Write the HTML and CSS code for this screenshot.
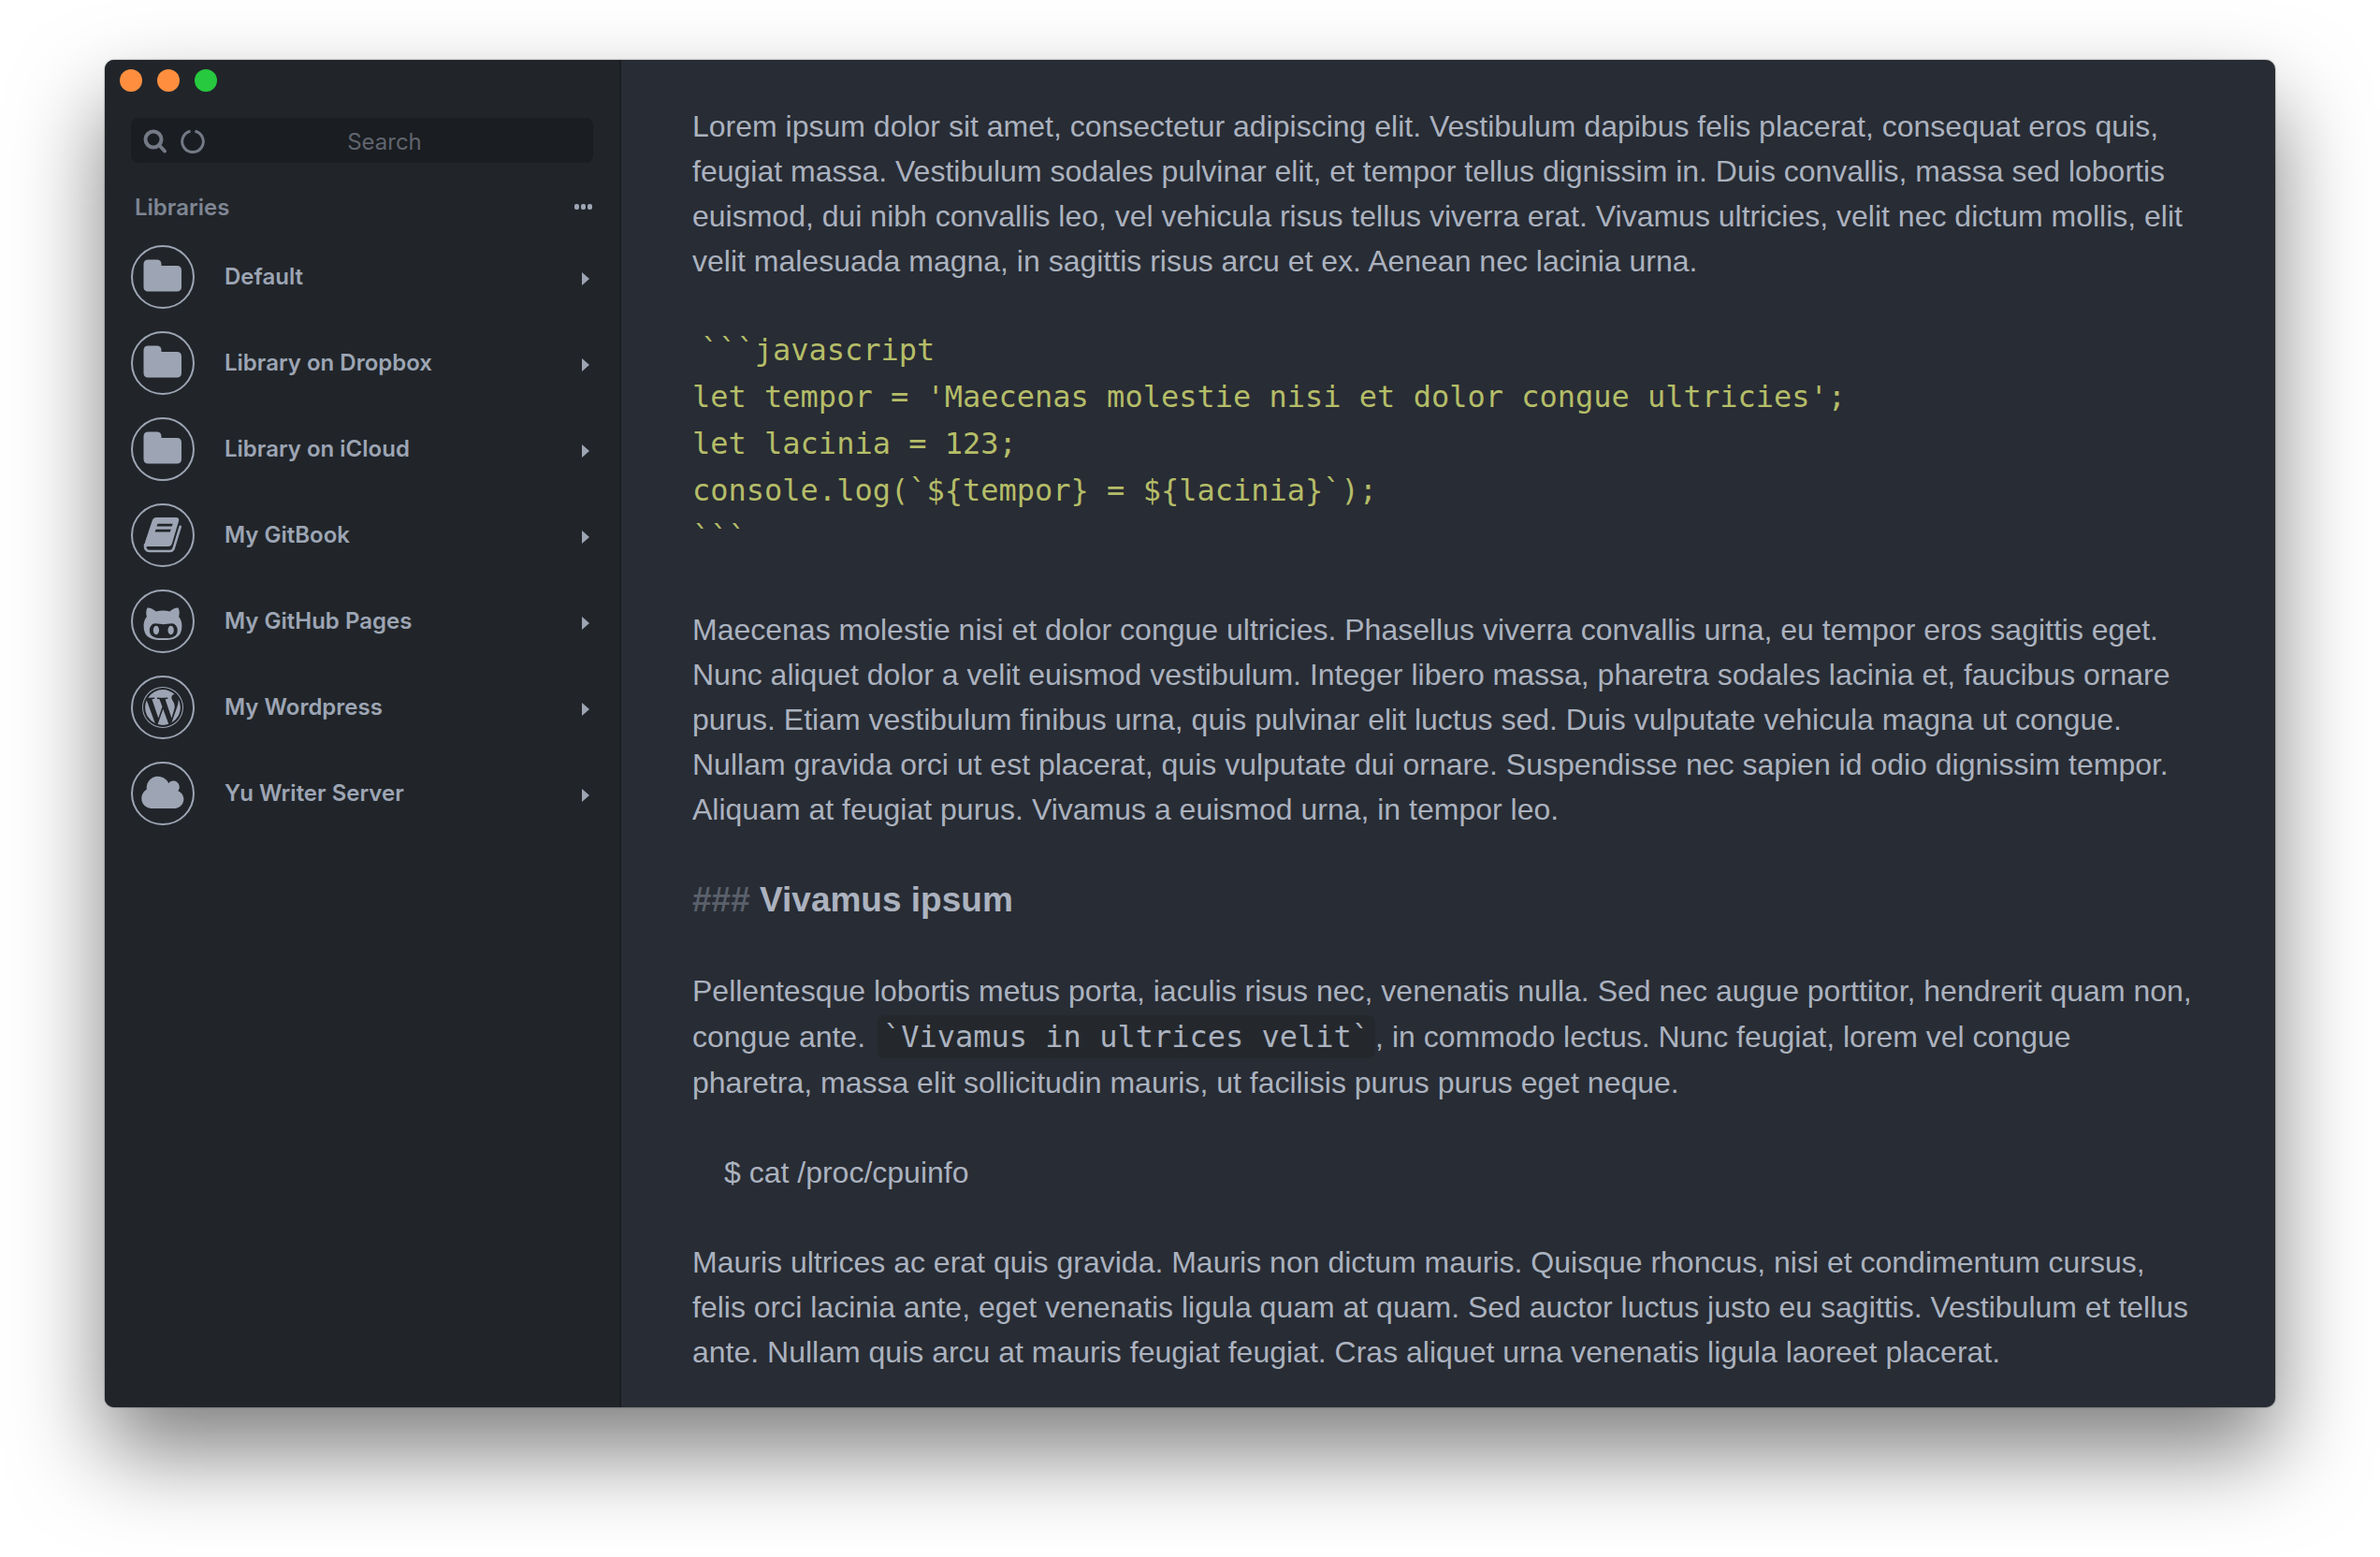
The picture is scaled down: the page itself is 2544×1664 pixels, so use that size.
FILE: index.html
```html
<!DOCTYPE html>
<html lang="en">
  <head>
    <meta charset="UTF-8" />
    <meta name="viewport" content="width=device-width, initial-scale=1.0" />
    <title>Yu Writer</title>
    <link rel="stylesheet" href="styles.css">
  </head>
  <body>
    <!-- shared icons -->
    <svg class="sprite" aria-hidden="true">
      <symbol id="folder" viewBox="12 12 44 44">
        <path d="M18.5 15.5h9q5 0 5 5v1.500h16.500q5 0 5 5v17.500q0 5-5 5h-30.500q-5 0-5-5v-24q0-5 5-5z" />
      </symbol>
      <symbol id="arrow" viewBox="0 0 8 14">
        <path d="M0 0l8 7-8 7z" />
      </symbol>
    </svg>

    <div class="window">
      <aside class="sidebar">
        <div class="window-btns">
          <button class="close" aria-label="Close"></button>
          <button class="minimize" aria-label="Minimize"></button>
          <button class="zoom" aria-label="Zoom"></button>
        </div>

        <div class="search">
          <div class="search-icons">
            <svg width="26" height="26" viewBox="0 0 26 26" fill="none" stroke="currentColor" aria-hidden="true">
              <circle cx="11" cy="11" r="8.500" stroke-width="4" />
              <path d="M17 17l6 6.500" stroke-width="4" stroke-linecap="round" />
            </svg>
            <svg width="26" height="26" viewBox="0 0 26 26" fill="none" stroke="currentColor" aria-hidden="true">
              <path d="M10.500 2.300a11.300 11.300 0 1 0 5 0" stroke-width="3" />
            </svg>
          </div>
          <input type="text" placeholder="Search" aria-label="Search" />
        </div>

        <div class="libraries-head">
          <h2>Libraries</h2>
          <button class="more" aria-label="More">
            <svg width="20" height="6" viewBox="0 0 20 6" aria-hidden="true">
              <rect width="5" height="6" rx="2" />
              <rect x="7" width="5" height="6" rx="2" />
              <rect x="14" width="5" height="6" rx="2" />
            </svg>
          </button>
        </div>

        <nav class="libraries">
          <a href="#">
            <span class="icon"><svg><use href="#folder" /></svg></span>
            <span class="name">Default</span>
            <svg class="arrow"><use href="#arrow" /></svg>
          </a>
          <a href="#">
            <span class="icon"><svg><use href="#folder" /></svg></span>
            <span class="name">Library on Dropbox</span>
            <svg class="arrow"><use href="#arrow" /></svg>
          </a>
          <a href="#">
            <span class="icon"><svg><use href="#folder" /></svg></span>
            <span class="name">Library on iCloud</span>
            <svg class="arrow"><use href="#arrow" /></svg>
          </a>
          <a href="#">
            <span class="icon">
              <svg viewBox="12 12 44 44">
                <path fill-rule="evenodd" d="M27.500 15h20.500q4 0 3 4l-7 23.500q-1 3.500-4.500 3.500h-21q-2 0-3 1-1.500-2-.5-5.500l7.500-22.500q1-4 5-4zM28.500 21.700l-1 2.800h16.200l1-2.800zM26.600 27.700l-1 2.800h16.200l1-2.800z" />
                <path fill="none" stroke="currentColor" stroke-width="2.600" stroke-linecap="round" stroke-linejoin="round" d="M15 44q-.5 7 5 7h21.500q3.200 0 4.200-3.200l7-23" />
              </svg>
            </span>
            <span class="name">My GitBook</span>
            <svg class="arrow"><use href="#arrow" /></svg>
          </a>
          <a href="#">
            <span class="icon">
              <svg viewBox="0 -64 1792 1792">
                <path d="M736 1216q0 40-12.500 82t-43 76-72.500 34-72.500-34-43-76-12.500-82 12.500-82 43-76 72.500-34 72.500 34 43 76 12.500 82zm640 0q0 40-12.500 82t-43 76-72.500 34-72.500-34-43-76-12.500-82 12.500-82 43-76 72.500-34 72.500 34 43 76 12.500 82zm160 0q0-120-69-204t-187-84q-41 0-195 21-71 11-157 11t-157-11q-152-21-195-21-118 0-187 84t-69 204q0 88 32 153.500t81 103 122 60 140 29.500 149 7h168q82 0 149-7t140-29.500 122-60 81-103 32-153.500zm192-192q0 207-61 331-38 77-105.500 133t-141 86-170 47.500-171.500 22-167 4.500q-78 0-142-3t-147.500-12.500-152.500-30-137-51.500-121-81-86-115q-62-123-62-331 0-237 136-396-27-82-27-170 0-116 51-218 108 0 190 39.500t189 123.500q147-35 309-35 148 0 280 32 105-82 187-121t189-39q51 102 51 218 0 87-27 168 136 160 136 398z" />
              </svg>
            </span>
            <span class="name">My GitHub Pages</span>
            <svg class="arrow"><use href="#arrow" /></svg>
          </a>
          <a href="#">
            <span class="icon">
              <svg viewBox="0 0 1792 1792">
                <path d="M127 896q0-163 67-313l367 1005q-196-95-315-281t-119-411zm1288-39q0 19-2.500 38.500t-10 49.500-11.500 44-17.500 59-17.500 58l-76 256-278-826q46-3 88-8 19-2 26-18.500t-2.500-31-28.500-13.500l-205 10q-75-1-202-10-12-1-20.500 5t-11.500 15-1.500 18.500 9 16.500 19.500 8l80 8 120 328-168 504-280-832q46-3 88-8 19-2 26-18.500t-2.500-31-28.500-13.500l-205 10q-7 0-23-.5t-26-.5q105-160 274.500-253.500t367.500-93.500q147 0 280.500 53t238.500 149h-10q-55 0-92 40.500t-37 95.500q0 12 2 24t4 21.500 8 23 9 21 12 22.500 12.500 21 14.500 24 14 23q63 107 63 212zm-506 106l237 647q1 6 5 11-126 44-255 44-112 0-217-32zm661-436q95 174 95 369 0 209-104 385.500t-279 278.500l235-678q59-169 59-276 0-42-6-79zm-674-527q182 0 348 71t286 191 191 286 71 348-71 348-191 286-286 191-348 71-348-71-286-191-191-286-71-348 71-348 191-286 286-191 348-71zm0 1751q173 0 331.500-68t273-182.500 182.500-273 68-331.500-68-331.500-182.500-273-273-182.500-331.500-68-331.500 68-273 182.500-182.500 273-68 331.500 68 331.500 182.500 273 273 182.500 331.500 68z" />
              </svg>
            </span>
            <span class="name">My Wordpress</span>
            <svg class="arrow"><use href="#arrow" /></svg>
          </a>
          <a href="#">
            <span class="icon">
              <svg viewBox="12 12 44 44">
                <path d="M21.500 50a10.800 10.800 0 0 1-4.800-20.200v-3a12.300 12.300 0 0 1 23.500-3.800a6 6 0 0 1 10.200 8.200a9.800 9.800 0 0 1-3.400 18.800z" />
              </svg>
            </span>
            <span class="name">Yu Writer Server</span>
            <svg class="arrow"><use href="#arrow" /></svg>
          </a>
        </nav>
      </aside>

      <main class="editor">
        <p>Lorem ipsum dolor sit amet, consectetur adipiscing elit. Vestibulum dapibus felis placerat, consequat eros quis, feugiat massa. Vestibulum sodales pulvinar elit, et tempor tellus dignissim in. Duis convallis, massa sed lobortis euismod, dui nibh convallis leo, vel vehicula risus tellus viverra erat. Vivamus ultricies, velit nec dictum mollis, elit velit malesuada magna, in sagittis risus arcu et ex. Aenean nec lacinia urna.</p>

        <pre> <code>```javascript
let tempor = 'Maecenas molestie nisi et dolor congue ultricies';
let lacinia = 123;
console.log(`${tempor} = ${lacinia}`);
```</code></pre>

        <p>Maecenas molestie nisi et dolor congue ultricies. Phasellus viverra convallis urna, eu tempor eros sagittis eget. Nunc aliquet dolor a velit euismod vestibulum. Integer libero massa, pharetra sodales lacinia et, faucibus ornare purus. Etiam vestibulum finibus urna, quis pulvinar elit luctus sed. Duis vulputate vehicula magna ut congue. Nullam gravida orci ut est placerat, quis vulputate dui ornare. Suspendisse nec sapien id odio dignissim tempor. Aliquam at feugiat purus. Vivamus a euismod urna, in tempor leo.</p>

        <h3><span class="mark">###</span> Vivamus ipsum</h3>

        <p>Pellentesque lobortis metus porta, iaculis risus nec, venenatis nulla. Sed nec augue porttitor, hendrerit quam non, congue ante. <code class="inline">`Vivamus in ultrices velit`</code>, in commodo lectus. Nunc feugiat, lorem vel congue pharetra, massa elit sollicitudin mauris, ut facilisis purus purus eget neque.</p>

        <p class="indented">$ cat /proc/cpuinfo</p>

        <p>Mauris ultrices ac erat quis gravida. Mauris non dictum mauris. Quisque rhoncus, nisi et condimentum cursus, felis orci lacinia ante, eget venenatis ligula quam at quam. Sed auctor luctus justo eu sagittis. Vestibulum et tellus ante. Nullam quis arcu at mauris feugiat feugiat. Cras aliquet urna venenatis ligula laoreet placerat.</p>
      </main>
    </div>
  </body>
</html>
```
FILE: styles.css
```css
* {
  box-sizing: border-box;
}

body {
  display: flex;
  min-height: 100vh;
  margin: 0;
  padding: 64px 112px 160px;
  background: #fff;
  font-family: Inter, "Liberation Sans", sans-serif;
}

button {
  margin: 0;
  padding: 0;
  background: none;
  border: none;
}

svg {
  display: block;
  fill: currentColor;
}

.sprite {
  position: absolute;
  width: 0;
  height: 0;
}

.window {
  display: flex;
  flex: 1;
  overflow: hidden;
  border-radius: 10px;
  background: #282c34;
  box-shadow: 0 0 2px rgba(0, 0, 0, 0.5), 0 48px 96px rgba(0, 0, 0, 0.5);
}

/* sidebar */
.sidebar {
  flex: none;
  width: 552px;
  padding: 10px 28px;
  border-right: 2px solid #1b1d23;
  background: #21252a;
  color: #9da5b4;
}

.window-btns {
  display: flex;
  gap: 16px;
  margin-left: -12px;
}

.window-btns button {
  width: 24px;
  height: 24px;
  border-radius: 50%;
  background: #ff8f3f;
}

.window-btns .zoom {
  background: #27c93f;
}

.search {
  position: relative;
  margin-top: 28px;
}

.search-icons {
  position: absolute;
  top: 12px;
  left: 13px;
  display: flex;
  gap: 14px;
  color: #737985;
}

.search-icons svg {
  fill: none;
}

.search input {
  display: block;
  width: 100%;
  height: 48px;
  padding: 2px 12px 0 60px;
  border: none;
  border-radius: 8px;
  background: #1a1d21;
  color: #9da5b4;
  font: 24px Inter, sans-serif;
  text-align: center;
}

.search input::placeholder {
  color: #60656f;
  opacity: 1;
}

.libraries-head {
  display: flex;
  align-items: center;
  justify-content: space-between;
  height: 32px;
  margin: 31px 0 25px;
  padding-left: 4px;
}

.libraries-head h2 {
  margin: 0;
  color: #7f8693;
  font-size: 24px;
  font-weight: 600;
}

.more {
  color: #9da5b4;
}

.libraries {
  display: flex;
  flex-direction: column;
  gap: 24px;
}

.libraries a {
  display: flex;
  align-items: center;
  color: inherit;
  font-size: 24px;
  font-weight: 600;
  text-decoration: none;
}

.icon {
  display: flex;
  align-items: center;
  justify-content: center;
  width: 68px;
  height: 68px;
  margin-right: 32px;
  border: 2px solid #9da5b4;
  border-radius: 50%;
}

.icon svg {
  width: 44px;
  height: 44px;
  overflow: visible;
}

.name {
  flex: 1;
  padding-bottom: 2px;
}

.arrow {
  width: 8px;
  height: 14px;
  margin: 3px 4px 0 0;
}

/* editor */
.editor {
  flex: 1;
  padding: 47px 84px 32px 76px;
  color: #abb2bf;
  font-family: "Liberation Sans", Arial, sans-serif;
  font-size: 32px;
  line-height: 48px;
}

.editor p,
.editor pre,
.editor h3 {
  margin: 0 0 48px;
}

.editor p:last-child {
  margin-bottom: 0;
}

.editor pre {
  margin: -2px 0 50px;
  color: #b5bd68;
  font-family: inherit;
  line-height: 50px;
}

.editor code {
  font-family: "DejaVu Sans Mono", Menlo, monospace;
  font-size: 32px;
}

.editor h3 {
  font-size: 37px;
  font-weight: 600;
  line-height: 50px;
}

.mark {
  color: #5a606b;
}

.editor .inline {
  padding: 4px 6px;
  margin-left: 4px;
  border-radius: 8px;
  background: #24282d;
  line-height: 50px;
}

.editor .indented {
  padding-left: 34px;
}
```
